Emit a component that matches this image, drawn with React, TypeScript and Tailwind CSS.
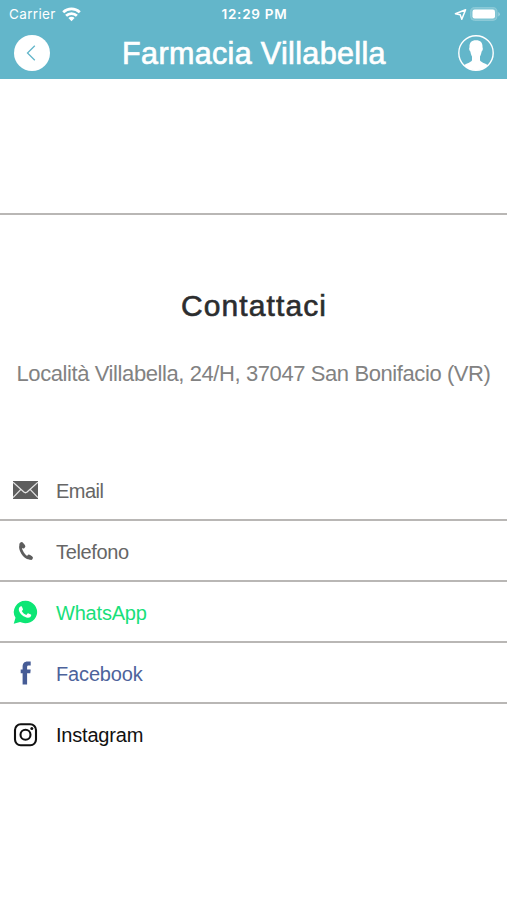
function StatusBar() {
  return (
    <div className="flex h-7 items-center justify-between pr-[7px] pl-[9px]">
      <div className="flex flex-1 items-center gap-[6px]">
        <span className="text-[13.5px] tracking-[0.35px]">Carrier</span>
        <svg className="h-[15px] w-[19px]" viewBox="0 0 19 15" fill="none" stroke="currentColor" strokeWidth="2.7">
          <path d="M1.200 5.300a12 12 0 0116.600 0M4.100 8.800a7.700 7.700 0 0110.800 0" />
          <path d="M6.400 11a4.400 4.400 0 016.200 0l-3.100 3.300z" fill="currentColor" stroke="none" />
        </svg>
      </div>
      <span className="text-[13.5px] font-semibold tracking-[0.75px]">12:29 PM</span>
      <div className="flex flex-1 items-center justify-end gap-[3px]">
        <svg className="h-[13px] w-[13px]" viewBox="0 0 13 13" fill="none" stroke="currentColor" strokeWidth="1.500" strokeLinejoin="round">
          <path d="M11.600 1.800L1.400 5.700l4.800 1.100 1.600 4.400z" />
        </svg>
        <svg className="h-[14px] w-[30px]" viewBox="0 0 30 14">
          <rect x="0.6" y="0.6" width="26.400" height="12.800" rx="4" fill="#7fc4d3" stroke="#8ecbd8" />
          <rect x="2.500" y="2.500" width="22.500" height="9" rx="2.200" fill="#fff" />
          <path d="M28.300 5v4.400q1.500-.8 1.500-2.200t-1.500-2.200z" fill="#a3d5df" />
        </svg>
      </div>
    </div>
  );
}

function Header() {
  return (
    <header className="h-[79px] bg-[#63b6ca] font-[Inter,sans-serif] text-white">
      <StatusBar />
      <div className="flex h-[50px] items-center justify-between pr-[13px] pl-[14px]">
        <button className="flex h-9 w-9 items-center justify-center rounded-full bg-white">
          <svg className="h-9 w-9" viewBox="0 0 36 36" fill="none" stroke="#63b6ca" strokeWidth="1.300">
            <path d="M20.800 10.800l-7.300 7.200 7.300 7.200" />
          </svg>
        </button>
        <h1 className="pt-px font-['Liberation_Sans',sans-serif] text-[30.5px] tracking-[0.35px] [-webkit-text-stroke:0.7px_white]">
          Farmacia Villabella
        </h1>
        <button>
          <svg className="h-9 w-9" viewBox="0 0 36 36">
            <circle cx="18" cy="18" r="17.200" fill="none" stroke="#fff" strokeWidth="1.400" />
            <path
              fill="#fff"
              d="M18 5.200c-4.600 0-6.700 2.700-6.500 6.800 0 .8-.5 1-.3 2.200.2 1.300.8 1.800 1.200 2.300.3 2.200.9 3.700 1.600 4.900v3.900c-.7 2-4.500 2.700-8.300 5A17 17 0 0018 35.200 17 17 0 0030.300 30.300c-3.800-2.300-7.600-3-8.300-5v-3.900c.7-1.200 1.300-2.700 1.600-4.900.4-.5 1-1 1.200-2.300.2-1.200-.3-1.400-.3-2.200.2-4.100-1.900-6.800-6.500-6.800z"
            />
          </svg>
        </button>
      </div>
    </header>
  );
}

function MailIcon() {
  return (
    <svg className="h-[18px] w-[25px]" viewBox="0 0 25 18">
      <rect width="25" height="18" fill="#5d5d5d" />
      <path
        d="M0 1.200l10.900 9.900q1.600 1.300 3.200 0L25 1.200M0 16.600l7.900-8.200M25 16.600l-7.900-8.200"
        fill="none"
        stroke="#e4e4e4"
        strokeWidth="1.300"
      />
    </svg>
  );
}

// Curved handle with a rounded pad at each end
function PhoneIcon() {
  return (
    <svg className="h-[20px] w-[16px]" viewBox="0 0 16 20" fill="none" stroke="#5d5d5d" strokeLinecap="round">
      <path d="M2.800 3.800C1.500 8.600 5.800 16.300 11.400 17.200" strokeWidth="2.800" />
      <path d="M3.600 3.100L5.300 5.300M11 15.600l1.900 1.300" strokeWidth="4" />
    </svg>
  );
}

// Solid bubble with the handset cut out in white
function WhatsAppIcon() {
  return (
    <svg className="h-[24px] w-[25px]" viewBox="0.500 0 24 24" preserveAspectRatio="none">
      <path
        fill="#0ce675"
        d="M12.700.7A11.300 11.300 0 002.900 17.800L1.200 23.800l6.100-1.700A11.300 11.300 0 1012.700.7z"
      />
      <path
        fill="#fff"
        d="M8 6.300c.5-.1.900 0 1.100.5l.9 2.100c.2.400.1.700-.1 1L8.900 11c1 1.900 2.500 3.200 4.400 4l1.200-1.400c.3-.3.600-.4.900-.2l2.200 1.100c.4.200.5.400.4.800-.2 1.800-1.800 2.600-3.300 2.500-3.700-.5-7.600-3.600-8.500-7.200-.4-1.800.1-3.700 1.800-4.300z"
      />
    </svg>
  );
}

function FacebookIcon() {
  return (
    <svg className="h-[24px] w-[12px]" viewBox="0 0 12 24" fill="#465c96">
      <path d="M2.600 23.500V12.300H.7V8.500h1.900V6.200C2.600 2.700 4 .6 7.700.6h3v3.800H8.800c-1.500 0-1.700.6-1.700 1.700v2.400h3.600l-.4 3.800H7.100v11.200z" />
    </svg>
  );
}

function InstagramIcon() {
  return (
    <svg className="h-[25px] w-[25px]" viewBox="0 0 25 25" fill="none" stroke="#111">
      <rect x="2" y="2.300" width="21" height="21" rx="5.700" strokeWidth="2.100" />
      <circle cx="12.500" cy="12.800" r="5" strokeWidth="2.100" />
      <circle cx="18.800" cy="6.600" r="1.500" fill="#111" stroke="none" />
    </svg>
  );
}

const contacts = [
  { label: 'Email', icon: <MailIcon />, style: 'text-[#666666] tracking-[-0.5px]' },
  { label: 'Telefono', icon: <PhoneIcon />, style: 'text-[#666666] tracking-[-0.35px]' },
  { label: 'WhatsApp', icon: <WhatsAppIcon />, style: 'text-[#18df7a] tracking-[-0.2px]' },
  { label: 'Facebook', icon: <FacebookIcon />, style: 'text-[#4d639b] tracking-[-0.15px]' },
  { label: 'Instagram', icon: <InstagramIcon />, style: 'text-[#111111] tracking-[-0.2px]' },
];

export default function App() {
  return (
    <div className="min-h-screen bg-white font-['Liberation_Sans',sans-serif]">
      <Header />
      <div className="h-[136px] border-b-2 border-[#b9b7b5]" />
      <div className="flex flex-col items-center pt-[68px] text-center">
        <h2 className="pl-px text-[30px] leading-[46px] tracking-[1.1px] text-[#2c2d2e] [-webkit-text-stroke:0.6px_#2c2d2e]">
          Contattaci
        </h2>
        <p className="mt-[30px] text-[22px] leading-[30px] tracking-[-0.41px] whitespace-nowrap text-[#828282]">
          Località Villabella, 24/H, 37047 San Bonifacio (VR)
        </p>
      </div>
      <ul className="mt-[71px]">
        {contacts.map((contact) => (
          <li
            key={contact.label}
            className="flex h-[61px] items-center border-b-2 border-[#b9b7b5] pt-px last:border-transparent"
          >
            <span className="flex w-[51px] justify-center">{contact.icon}</span>
            <span className={`ml-[5px] pt-px text-[20px] ${contact.style}`}>{contact.label}</span>
          </li>
        ))}
      </ul>
    </div>
  );
}
